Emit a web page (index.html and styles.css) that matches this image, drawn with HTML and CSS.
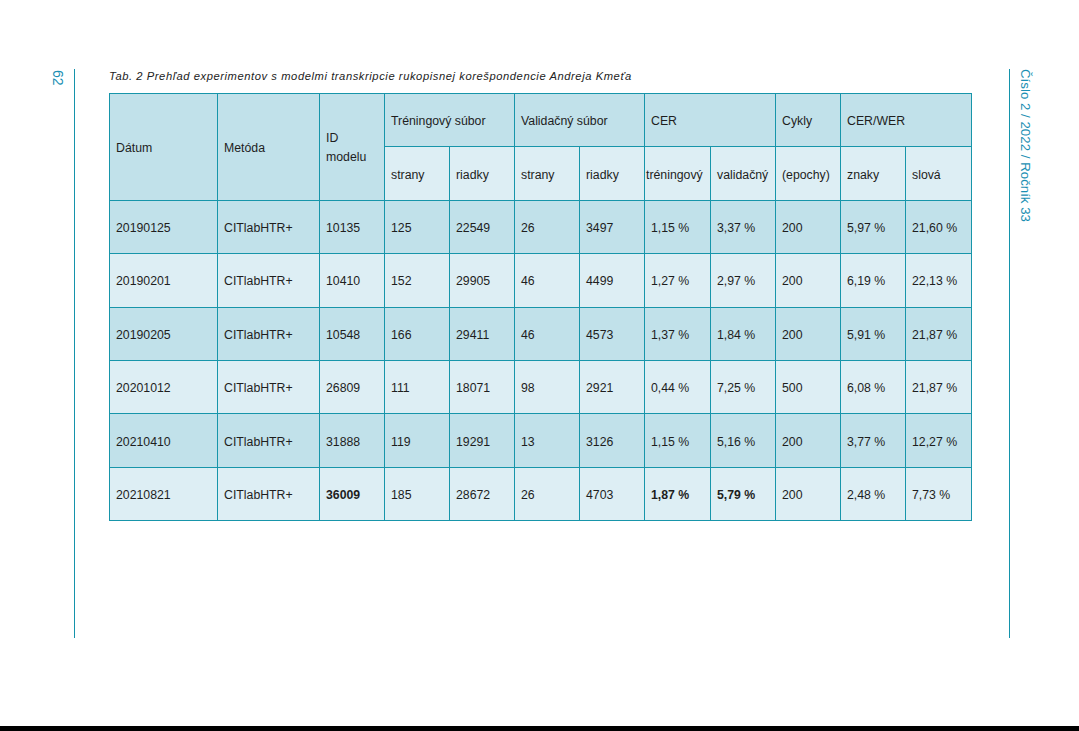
FILE: index.html
```html
<!DOCTYPE html>
<html lang="sk">
<head>
<meta charset="utf-8">
<title>Tab. 2</title>
<link rel="stylesheet" href="styles.css">
</head>
<body>
<div class="page">
  <div class="gutter gutter-left"><span class="folio">62</span></div>
  <div class="rule"></div>
  <main class="content">
    <p class="caption">Tab. 2 Prehľad experimentov s modelmi transkripcie rukopisnej korešpondencie Andreja Kmeťa</p>
    <table class="data">
      <colgroup>
        <col class="c-date"><col class="c-method"><col class="c-std"><col class="c-std"><col class="c-std"><col class="c-std"><col class="c-std"><col class="c-wide"><col class="c-std"><col class="c-std"><col class="c-std"><col class="c-wide">
      </colgroup>
      <thead>
        <tr class="dark">
          <th rowspan="2">Dátum</th>
          <th rowspan="2">Metóda</th>
          <th rowspan="2">ID<br>modelu</th>
          <th colspan="2">Tréningový súbor</th>
          <th colspan="2">Validačný súbor</th>
          <th colspan="2">CER</th>
          <th>Cykly</th>
          <th colspan="2">CER/WER</th>
        </tr>
        <tr class="light">
          <th>strany</th>
          <th>riadky</th>
          <th>strany</th>
          <th>riadky</th>
          <th class="tight">tréningový</th>
          <th>validačný</th>
          <th>(epochy)</th>
          <th>znaky</th>
          <th>slová</th>
        </tr>
      </thead>
      <tbody>
        <tr class="dark"><td>20190125</td><td>CITlabHTR+</td><td>10135</td><td>125</td><td>22549</td><td>26</td><td>3497</td><td>1,15 %</td><td>3,37 %</td><td>200</td><td>5,97 %</td><td>21,60 %</td></tr>
        <tr class="light"><td>20190201</td><td>CITlabHTR+</td><td>10410</td><td>152</td><td>29905</td><td>46</td><td>4499</td><td>1,27 %</td><td>2,97 %</td><td>200</td><td>6,19 %</td><td>22,13 %</td></tr>
        <tr class="dark"><td>20190205</td><td>CITlabHTR+</td><td>10548</td><td>166</td><td>29411</td><td>46</td><td>4573</td><td>1,37 %</td><td>1,84 %</td><td>200</td><td>5,91 %</td><td>21,87 %</td></tr>
        <tr class="light"><td>20201012</td><td>CITlabHTR+</td><td>26809</td><td>111</td><td>18071</td><td>98</td><td>2921</td><td>0,44 %</td><td>7,25 %</td><td>500</td><td>6,08 %</td><td>21,87 %</td></tr>
        <tr class="dark"><td>20210410</td><td>CITlabHTR+</td><td>31888</td><td>119</td><td>19291</td><td>13</td><td>3126</td><td>1,15 %</td><td>5,16 %</td><td>200</td><td>3,77 %</td><td>12,27 %</td></tr>
        <tr class="light"><td>20210821</td><td>CITlabHTR+</td><td class="b">36009</td><td>185</td><td>28672</td><td>26</td><td>4703</td><td class="b">1,87 %</td><td class="b">5,79 %</td><td>200</td><td>2,48 %</td><td>7,73 %</td></tr>
      </tbody>
    </table>
  </main>
  <div class="rule"></div>
  <div class="gutter gutter-right"><span class="running">Číslo 2 / 2022 / Ročník 33</span></div>
</div>
<div class="footer-bar"></div>
</body>
</html>
```

FILE: styles.css
```css
html, body {
  margin: 0;
  padding: 0;
  background: #ffffff;
}

body {
  font-family: "Liberation Sans", Arial, sans-serif;
  color: #1e1e1e;
}

.page {
  height: 726px;
  box-sizing: border-box;
  padding-top: 69px;
  display: flex;
  align-items: flex-start;
}

.gutter {
  display: flex;
}

.gutter-left {
  width: 74px;
  justify-content: flex-end;
}

.gutter-right {
  flex: 1;
  justify-content: flex-start;
}

.folio,
.running {
  writing-mode: vertical-rl;
  font-size: 13.3px;
  line-height: 14px;
  color: #1b8fb3;
}

.folio {
  font-size: 14px;
  margin-right: 9px;
  margin-top: 1px;
}

.running {
  margin-left: 8px;
  margin-top: 0;
}

.rule {
  width: 1px;
  height: 569px;
  background: #1493ab;
  flex: none;
}

.content {
  width: 934px;
  box-sizing: border-box;
  padding-left: 34px;
}

.caption {
  margin: 0 0 10px 0;
  height: 14px;
  font-size: 11.2px;
  letter-spacing: 0.57px;
  line-height: 14px;
  font-style: italic;
  color: #222222;
  white-space: nowrap;
}

.data {
  width: 862px;
  border-collapse: collapse;
  table-layout: fixed;
  font-size: 12.3px;
}

.c-date { width: 108px; }
.c-method { width: 102px; }
.c-std { width: 65px; }
.c-wide { width: 66px; }

.data th,
.data td {
  border: 1px solid #1795aa;
  padding: 3px 6px 0 6px;
  text-align: left;
  vertical-align: middle;
  font-weight: normal;
  line-height: 19px;
  white-space: nowrap;
  overflow: visible;
}

.data th.tight {
  padding-left: 1px;
  padding-right: 1px;
}

.data tr {
  height: 53.4px;
}

.dark th,
.dark td {
  background: #c1e1ea;
}

.light th,
.light td {
  background: #ddeef4;
}

.data td.b {
  font-weight: bold;
}

.footer-bar {
  height: 5px;
  background: #000000;
}
```
